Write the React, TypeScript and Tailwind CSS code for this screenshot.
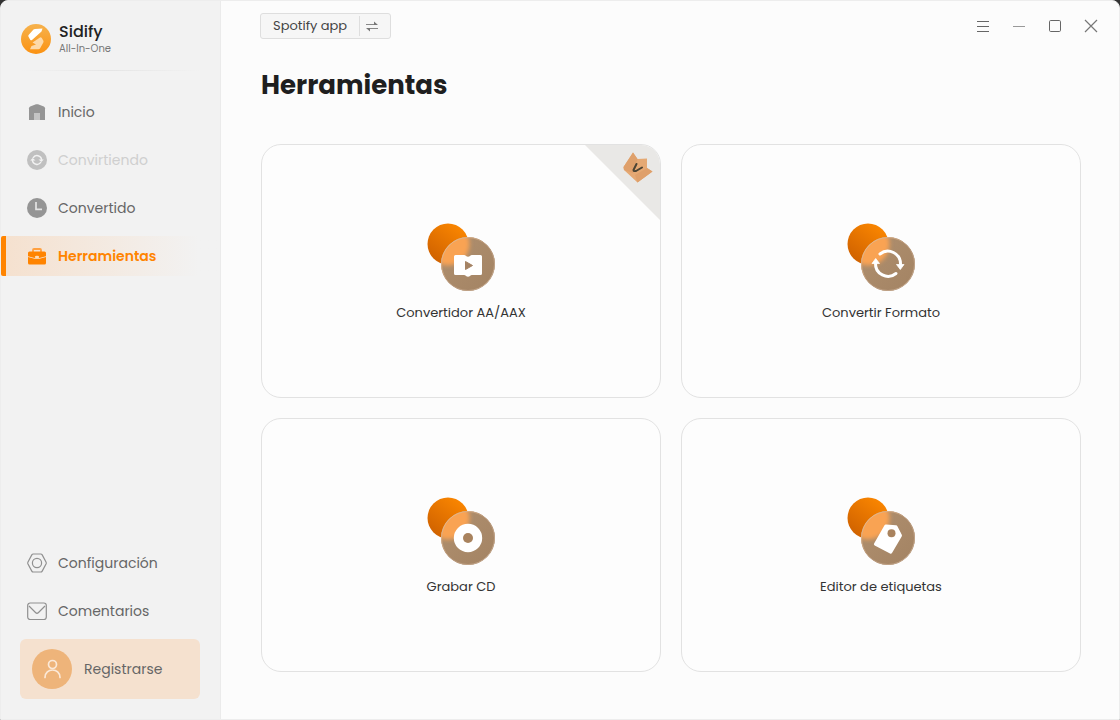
import { useId, type ReactNode } from "react";

function Logo() {
  return (
    <svg viewBox="0 0 30 30" className="size-[30px] shrink-0" aria-hidden="true">
      <defs>
        <linearGradient id="logo-fill" x1="0" y1="0" x2="0" y2="1">
          <stop offset="0" stopColor="#f6b24d" />
          <stop offset="1" stopColor="#fb9212" />
        </linearGradient>
      </defs>
      <circle cx="15" cy="15" r="15" fill="url(#logo-fill)" />
      <path d="M12.500 5.500 Q13 5 14 5 L21.500 4.500 L20.500 7.500 L11 16 Q10 16.800 9.200 15.800 L7.400 12.500 Q7 11.500 7.800 10.700 Z" fill="#fff" />
      <path d="M19 13.500 Q20 13 20.800 14 L22.400 16.800 Q22.800 17.800 22.200 18.700 L19 24.500 Q18.500 25.300 17.500 25.300 H9 L10.500 22 L15 20.500 L11.500 18.500 Z" fill="#fdd9a9" />
    </svg>
  );
}

function HomeIcon() {
  return (
    <svg viewBox="0 0 20 20" className="size-5" aria-hidden="true">
      <path d="M2 6.200 Q2 5 3.200 4.500 L9 2.300 Q10 2 11 2.300 L16.800 4.500 Q18 5 18 6.200 V18 H2 Z" fill="#959595" />
      <path d="M7 11 H13 V18 H7 Z" fill="#c4c4c4" />
    </svg>
  );
}

function SyncIcon() {
  return (
    <svg viewBox="0 0 20 20" className="size-5" aria-hidden="true">
      <circle cx="10" cy="10" r="10" fill="#c0c0c0" />
      <g fill="none" stroke="#f2f2f2" strokeWidth="1.500">
        <path d="M6 8 A4.600 4.600 0 0 1 14.600 10" />
        <path d="M14 12 A4.600 4.600 0 0 1 5.400 10" />
      </g>
      <path d="M11.500 9.500 H16.800 L14.300 12 Z M8.500 10.500 H3.200 L5.700 8 Z" fill="#f2f2f2" />
    </svg>
  );
}

function ClockIcon() {
  return (
    <svg viewBox="0 0 20 20" className="size-5" aria-hidden="true">
      <circle cx="10" cy="10" r="10" fill="#959595" />
      <path d="M9 4 V11.300 H15" fill="none" stroke="#e4e4e4" strokeWidth="1.700" />
    </svg>
  );
}

function ToolboxIcon() {
  return (
    <svg viewBox="0 0 20 20" className="size-5" aria-hidden="true">
      <path d="M6 6 V4 Q6 3 7 3 H13 Q14 3 14 4 V6" fill="none" stroke="#ffa040" strokeWidth="1.800" />
      <path d="M2.500 5.500 H17.500 Q19 5.500 19 7 V10.300 L12.500 12 H7.500 L1 10.300 V7 Q1 5.500 2.500 5.500 Z" fill="#ff8400" />
      <path d="M1 11 L7.500 12.700 H12.500 L19 11 V17 Q19 18.500 17.500 18.500 H2.500 Q1 18.500 1 17 Z" fill="#ff8400" />
      <ellipse cx="10" cy="11" rx="2.200" ry="1.200" fill="#ffdcb5" />
    </svg>
  );
}

function NutIcon() {
  return (
    <svg viewBox="0 0 20 20" className="size-5" fill="none" stroke="#909090" strokeWidth="1.200" aria-hidden="true">
      <path d="M6.300 1 H13.700 Q14.700 1 15.200 1.900 L19 9 Q19.500 10 19 11 L15.200 18.100 Q14.700 19 13.700 19 H6.300 Q5.300 19 4.800 18.100 L1 11 Q0.500 10 1 9 L4.800 1.900 Q5.300 1 6.300 1 Z" />
      <circle cx="10" cy="10" r="4.600" />
    </svg>
  );
}

function MailIcon() {
  return (
    <svg viewBox="0 0 20 20" className="size-5" fill="none" stroke="#909090" strokeWidth="1.200" aria-hidden="true">
      <rect x="0.700" y="2" width="18.600" height="16.500" rx="2.500" />
      <path d="M2 5 L8.500 11.500 Q10 13 11.500 11.500 L18 5" />
    </svg>
  );
}

function NavItem({ icon, label, state }: { icon: ReactNode; label: string; state?: "active" | "disabled" }) {
  if (state === "active") {
    return (
      <button
        type="button"
        aria-current="page"
        className="flex h-10 w-full items-center gap-[11px] rounded-l-[2px] border-l-[5px] border-[#ff8400] bg-linear-to-r from-[#f5e1cf] to-[#f2f2f2] to-90% pl-[21px] text-left text-sm font-semibold text-[#ff8400]"
      >
        {icon}
        {label}
      </button>
    );
  }
  if (state === "disabled") {
    return (
      <button type="button" disabled className="flex h-10 w-full items-center gap-[11px] pl-[26px] text-left text-sm text-[#cfcfcf]">
        {icon}
        {label}
      </button>
    );
  }
  return (
    <button type="button" className="flex h-10 w-full items-center gap-[11px] pl-[26px] text-left text-sm text-[#666]">
      {icon}
      {label}
    </button>
  );
}

function GlassIcon({ children }: { children: ReactNode }) {
  const id = useId();
  return (
    <svg viewBox="0 0 70 70" className="size-[70px]" aria-hidden="true">
      <defs>
        <linearGradient id={`${id}o`} x1="0.800" y1="0.100" x2="0.200" y2="0.900">
          <stop offset="0" stopColor="#f98500" />
          <stop offset="1" stopColor="#d16300" />
        </linearGradient>
        <linearGradient id={`${id}g`} x1="0" y1="0" x2="1" y2="1">
          <stop offset="0" stopColor="#b0906f" />
          <stop offset="1" stopColor="#a38363" />
        </linearGradient>
        <linearGradient id={`${id}r`} x1="0" y1="0" x2="1" y2="1">
          <stop offset="0" stopColor="#f5c493" />
          <stop offset="0.500" stopColor="#b8977a" />
          <stop offset="1" stopColor="#c9ae94" />
        </linearGradient>
        <filter id={`${id}b`} x="-30%" y="-30%" width="160%" height="160%">
          <feGaussianBlur stdDeviation="2.200" />
        </filter>
        <clipPath id={`${id}c`}>
          <circle cx="42" cy="42" r="27" />
        </clipPath>
      </defs>
      <circle cx="22" cy="22" r="20.500" fill={`url(#${id}o)`} />
      <circle cx="42" cy="42" r="27" fill={`url(#${id}g)`} />
      <g clipPath={`url(#${id}c)`}>
        <circle cx="22" cy="22" r="21.500" fill="#f9a352" filter={`url(#${id}b)`} />
      </g>
      <circle cx="42" cy="42" r="26.500" fill="none" stroke={`url(#${id}r)`} />
      {children}
    </svg>
  );
}

const tools: { label: string; glyph: ReactNode; premium?: boolean }[] = [
  {
    label: "Convertidor AA/AAX",
    premium: true,
    glyph: (
      <>
        <path
          d="M29.500 33 H38 Q39.300 33 40 34 Q42 35.300 44 34 Q44.700 33 46 33 H54.500 Q56 33 56 34.500 V51.500 Q56 53 54.500 53 H46 Q44.700 53 44 54.100 Q42 55.500 40 54.100 Q39.300 53 38 53 H29.500 Q28 53 28 51.500 V34.500 Q28 33 29.500 33 Z"
          fill="#fff"
        />
        <path d="M39.500 39.500 L46.500 43.500 L39.500 47.500 Z" fill="#a58364" stroke="#a58364" strokeLinejoin="round" />
      </>
    ),
  },
  {
    label: "Convertir Formato",
    glyph: (
      <>
        <g fill="none" stroke="#fff" strokeWidth="3" strokeLinecap="round">
          <path d="M34 32 A12.600 12.600 0 0 1 54.500 42" />
          <path d="M50 51.500 A12.600 12.600 0 0 1 29.500 41" />
        </g>
        <path d="M50.500 42.500 H58 L54.300 47.500 Z M26 41.500 H33.500 L29.700 36.500 Z" fill="#fff" stroke="#fff" strokeWidth="0.800" strokeLinejoin="round" />
      </>
    ),
  },
  {
    label: "Grabar CD",
    glyph: (
      <>
        <circle cx="42" cy="42" r="14.200" fill="#fff" />
        <circle cx="42" cy="42" r="5" fill="#a9835e" />
      </>
    ),
  },
  {
    label: "Editor de etiquetas",
    glyph: (
      <>
        <path d="M38.500 29.200 Q39 28.500 40 28.600 L50 29.200 Q51 29.300 51.400 30.200 L55.800 38.800 Q56.200 39.500 55.700 40.400 L46 57 Q45.200 58.200 44 57.500 L28.700 49.500 Q27.400 48.700 28.100 47.500 Z" fill="#fff" />
        <circle cx="45.500" cy="37.300" r="4" fill="#a9835e" />
      </>
    ),
  },
];

function PremiumCorner() {
  return (
    <svg viewBox="0 0 75 75" className="absolute top-0 right-0 size-[75px]" aria-hidden="true">
      <path d="M0 0 H75 V75 Z" fill="#e9e8e6" />
      <path d="M48 7.500 L52.500 14 L62 13.500 L62 23 L67.500 26.500 L52.500 37.500 L39 25 L38.500 22 Z" fill="#e5a974" />
      <path d="M48 7.500 L52.500 14 L48 28 L39 25 L38.500 22 Z M62 23 L67.500 26.500 L52.500 37.500 L50 30 Z" fill="#dfa06b" />
      <path d="M51.500 19 Q50 22 48.500 25 Q48.500 26.500 51 26 L57 22.500" fill="none" stroke="#4c4434" strokeWidth="2" strokeLinecap="round" strokeLinejoin="round" />
    </svg>
  );
}

export default function App() {
  return (
    <div className="min-h-screen bg-[#333]">
      <div
        className="flex min-h-screen overflow-hidden rounded-t-lg border border-[#ededed] bg-[#fcfcfc]"
        style={{ fontFamily: 'Poppins, Inter, "Open Sans", sans-serif' }}
      >
        <aside className="flex w-[220px] shrink-0 flex-col border-r border-[#ebebeb] bg-[#f2f2f2]">
          <div className="flex items-center gap-2 px-5 pt-[21px]">
            <Logo />
            <div>
              <p className="text-base leading-5 font-medium text-[#222]">Sidify</p>
              <p className="text-[10px] leading-[14px] text-[#777]">All-In-One</p>
            </div>
          </div>
          <div className="mx-5 mt-[14px] h-px bg-linear-to-r from-[#f2f2f2] via-[#e5e5e5] to-[#f2f2f2]" />
          <nav className="mt-[21px] flex flex-col gap-2" aria-label="Principal">
            <NavItem icon={<HomeIcon />} label="Inicio" />
            <NavItem icon={<SyncIcon />} label="Convirtiendo" state="disabled" />
            <NavItem icon={<ClockIcon />} label="Convertido" />
            <NavItem icon={<ToolboxIcon />} label="Herramientas" state="active" />
          </nav>
          <div className="mt-auto flex flex-col gap-2 pb-5">
            <NavItem icon={<NutIcon />} label="Configuración" />
            <NavItem icon={<MailIcon />} label="Comentarios" />
            <button type="button" className="mr-5 ml-[19px] flex h-[60px] items-center gap-3 rounded-md bg-[#f5e1cf] px-3 text-sm text-[#666]">
              <span className="flex size-10 items-center justify-center rounded-full bg-[#eeb47a]">
                <svg viewBox="0 0 20 20" className="size-5" fill="none" stroke="#fbe9d8" strokeWidth="1.700" strokeLinecap="round" aria-hidden="true">
                  <circle cx="10.500" cy="5.500" r="4" />
                  <path d="M3 18.500 C3 8.500 18 8.500 18 18.500" />
                </svg>
              </span>
              Registrarse
            </button>
          </div>
        </aside>

        <main className="flex min-w-0 grow flex-col pr-[38px] pb-[47px] pl-10">
          <header className="flex items-start justify-between pt-3">
            <button type="button" aria-label="Spotify app, cambiar" className="-ml-px flex h-[26px] items-center rounded-[3px] border border-[#dedede] bg-[#f6f6f6] text-[13px] text-[#444]">
              <span className="px-3 leading-5">Spotify app</span>
              <span className="flex h-5 items-center border-l border-[#dedede] pr-[11px] pl-[5px]">
                <svg viewBox="0 0 14 14" className="size-[14px]" fill="none" stroke="#888" strokeWidth="1.200" aria-hidden="true">
                  <path d="M1 5.500 H12 M2 9.500 H13" />
                  <path d="M9 2.500 L13 6 H9 Z M5 12.500 L1 9 H5 Z" fill="#777" stroke="none" />
                </svg>
              </span>
            </button>
            <div className="-mr-5 flex gap-4 pt-[3px]">
              <button type="button" aria-label="Menú" className="size-5">
                <svg viewBox="0 0 20 20" className="size-5" stroke="#666" aria-hidden="true">
                  <path d="M4 5.500 H16 M4 10.500 H16 M4 15.500 H16" />
                </svg>
              </button>
              <button type="button" aria-label="Minimizar" className="size-5">
                <svg viewBox="0 0 20 20" className="size-5" stroke="#999" aria-hidden="true">
                  <path d="M4 10.500 H16" />
                </svg>
              </button>
              <button type="button" aria-label="Maximizar" className="size-5">
                <svg viewBox="0 0 20 20" className="size-5" fill="none" stroke="#666" aria-hidden="true">
                  <rect x="4.500" y="4.500" width="11" height="11" rx="1.200" />
                </svg>
              </button>
              <button type="button" aria-label="Cerrar" className="size-5">
                <svg viewBox="0 0 20 20" className="size-5" stroke="#777" strokeWidth="1.200" aria-hidden="true">
                  <path d="M4 4 L16 16 M16 4 L4 16" />
                </svg>
              </button>
            </div>
          </header>

          <h1 className="mt-[26px] text-[26px] leading-10 font-bold text-[#1f1f1f]">Herramientas</h1>

          <div className="mt-[39px] grid grow auto-rows-fr grid-cols-2 gap-5">
            {tools.map((tool) => (
              <button
                key={tool.label}
                type="button"
                className="relative flex flex-col items-center justify-center gap-[11px] overflow-hidden rounded-[20px] border border-[#e2e2e2] bg-[#fdfdfd] pt-[3px] text-[13px] leading-5 text-[#333]"
              >
                {tool.premium && <PremiumCorner />}
                <GlassIcon>{tool.glyph}</GlassIcon>
                {tool.label}
              </button>
            ))}
          </div>
        </main>
      </div>
    </div>
  );
}
